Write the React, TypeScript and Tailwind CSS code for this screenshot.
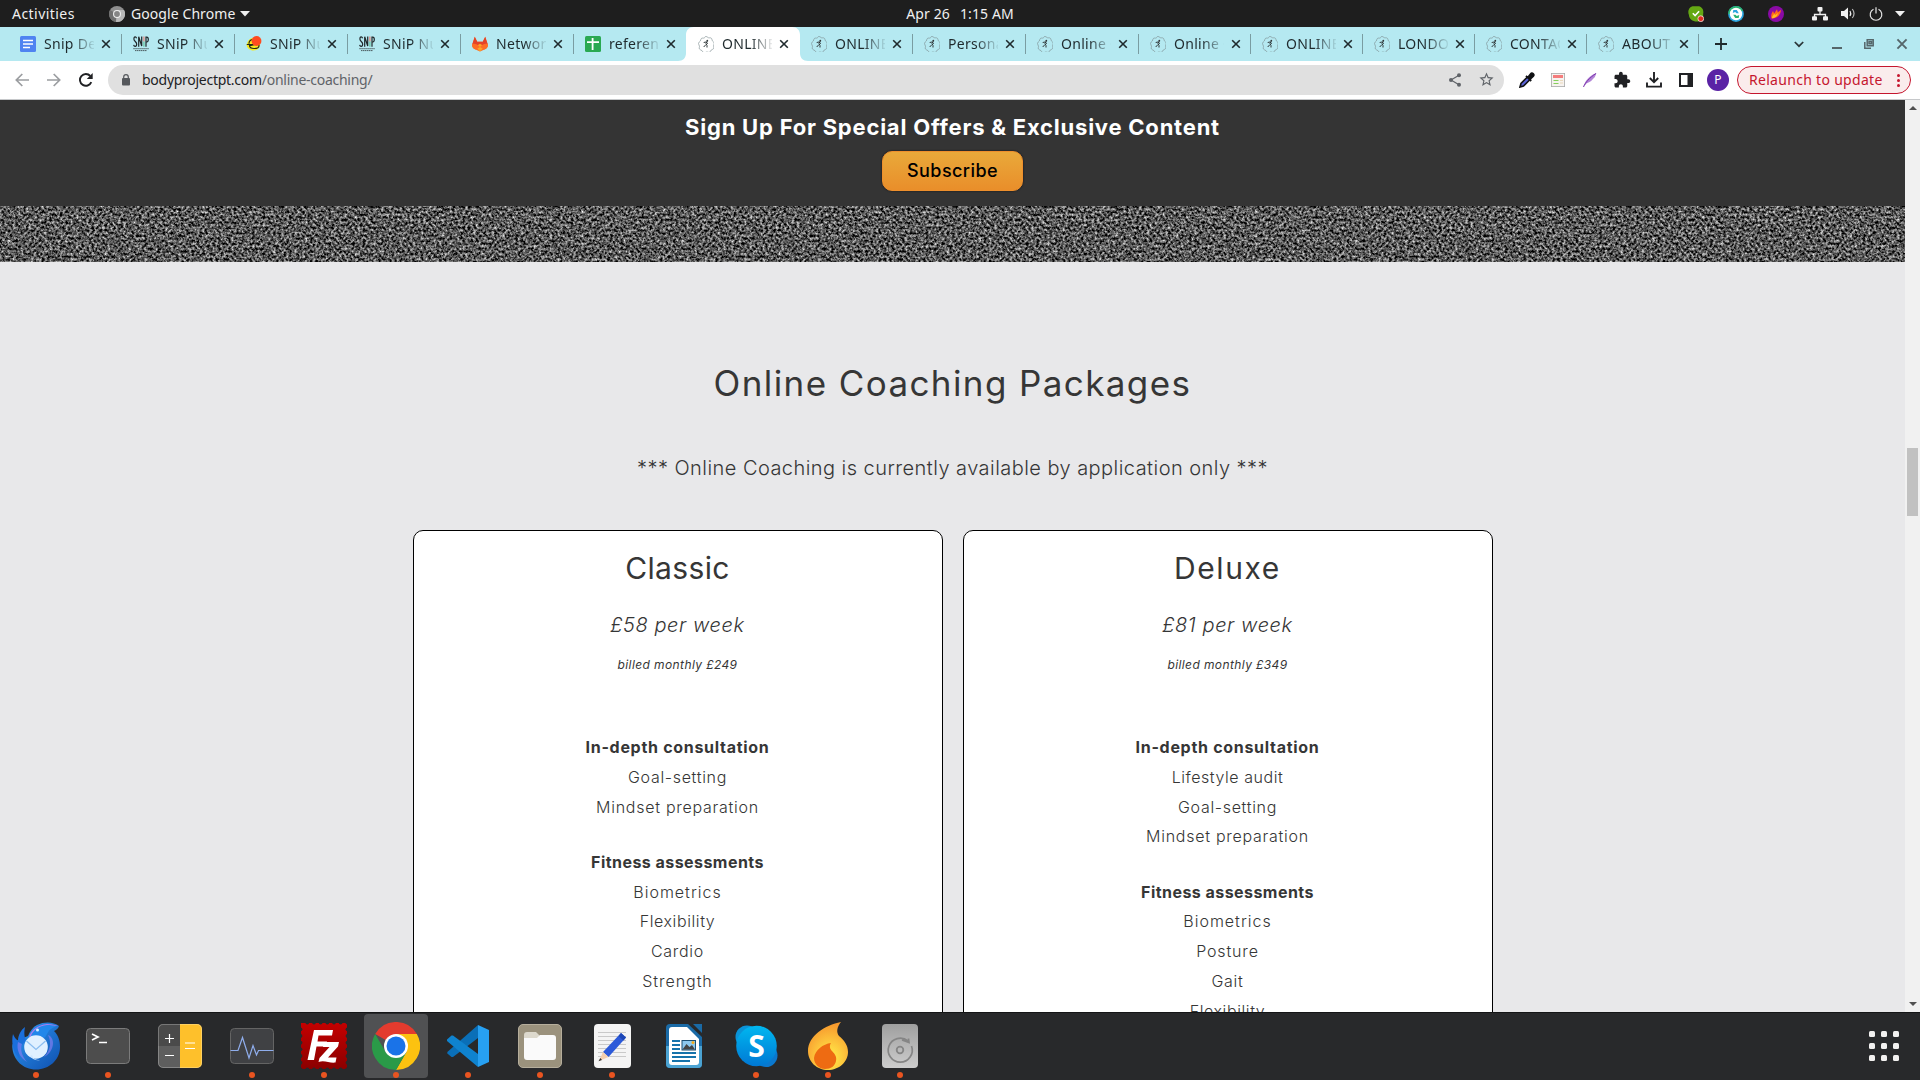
import type { ReactNode } from "react";

type IconKind = "docs" | "snip" | "duck" | "gitlab" | "sheet" | "body";

const tabs: { icon: IconKind; title: string; width: string }[] = [
  { icon: "docs", title: "Snip Design", width: "w-[113px]" },
  { icon: "snip", title: "SNiP Nutrition", width: "w-[113px]" },
  { icon: "duck", title: "SNiP Nutrition", width: "w-[113px]" },
  { icon: "snip", title: "SNiP Nutrition", width: "w-[113px]" },
  { icon: "gitlab", title: "Network", width: "w-[113px]" },
  { icon: "sheet", title: "reference", width: "w-[113px]" },
  { icon: "body", title: "ONLINE", width: "w-[113px]" },
  { icon: "body", title: "ONLINE", width: "w-[113px]" },
  { icon: "body", title: "Personal", width: "w-[113px]" },
  { icon: "body", title: "Online C", width: "w-[113px]" },
  { icon: "body", title: "Online C", width: "w-[112px]" },
  { icon: "body", title: "ONLINE", width: "w-[112px]" },
  { icon: "body", title: "LONDON", width: "w-[112px]" },
  { icon: "body", title: "CONTACT", width: "w-[112px]" },
  { icon: "body", title: "ABOUT U", width: "w-[112px]" },
];
const ACTIVE = 6;

function Favicon({ kind }: { kind: IconKind }) {
  switch (kind) {
    case "docs":
      return (
        <svg viewBox="0 0 16 16" className="size-4">
          <rect width="16" height="16" rx="1.5" fill="#4f83f1" />
          <path d="M3 4.5h10M3 8h10M3 11.5h7" stroke="#fff" strokeWidth="1.6" />
        </svg>
      );
    case "snip":
      return (
        <svg viewBox="0 0 16 16" className="size-4">
          <g fill="none" stroke="#20282b" strokeWidth="1.2">
            <path d="M3.600 2.200C2.800.2.900.5.900 2.900c0 2.600 2.800 2.500 2.800 5.300 0 2.600-2.500 2.800-3.100.6" />
            <path d="M5.700 10.700V.8L8.700 10V.5" />
            <path d="M13 10.700V1.100h.800c2 0 2 4.900 0 4.900H13" />
          </g>
          <path d="M10.900.5v5" stroke="#e98a83" strokeWidth="1.300" />
          <path d="M10.900 5.500v5.200" stroke="#68c9a6" strokeWidth="1.300" />
          <path d="M.3 12.700h15.400M2 14.600h12" stroke="#4c5c60" strokeWidth="1" strokeDasharray="1.500 .5" />
        </svg>
      );
    case "duck":
      return (
        <svg viewBox="0 0 16 16" className="size-4">
          <path d="M1 7.500c1-4 4-6 7-5.500 4 .5 6.500 4 6 7.500-.5 3-3 5-6.500 5C4 14.500 1 12 .5 9z" fill="#f6ea1e" />
          <path d="M.8 8.500h6M3 7.800c0-2.500 1.500-4 3.500-4.300M3.500 9.500c0 2 2 3 4.500 3s5-1 5-2.800-1.500-1.500-4-1.200c-1.800.3-3.500.8-5.500 1z" fill="none" stroke="#24281a" strokeWidth="1.200" />
          <circle cx="10.500" cy="5" r="4.900" fill="#ff4b1f" />
        </svg>
      );
    case "gitlab":
      return (
        <svg viewBox="0 0 16 16" className="size-4">
          <path d="M.3 8.200 2.800.8l2.400 5h5.600l2.400-5 2.500 7.400c.6 2-.2 3.500-1.500 4.500L8 15.500l-6.200-2.800C.5 11.700-.3 10.200.3 8.200z" fill="#fc6d26" />
          <path d="m.3 8.200 2.500-7.400 2.400 5h5.600l2.400-5 2.500 7.400L8 11z" fill="#e24329" />
          <path d="m3.500 10.500 4.500-2.800 4.500 2.800L8 15.600z" fill="#fca326" />
          <path d="M.3 8.200C2.500 7 5 8 8 11l-4.300 2.600C1 12.300-.3 10.400.3 8.200zM15.700 8.200C13.500 7 11 8 8 11l4.300 2.600c2.700-1.300 4-3.200 3.400-5.400z" fill="#fc6d26" />
        </svg>
      );
    case "sheet":
      return (
        <svg viewBox="0 0 16 16" className="size-4">
          <rect width="16" height="16" rx="1.500" fill="#2aa952" />
          <path d="M2 6.200h12M7.600 2v12" stroke="#fff" strokeWidth="1.800" />
        </svg>
      );
    default:
      return (
        <svg viewBox="0 0 16 16" className="size-4">
          <path
            d="M8 .6c1 0 1.300.9 2.200 1.200.9.300 1.800-.2 2.600.4.800.6.500 1.500 1 2.300.5.800 1.500 1 1.700 2 .2.900-.6 1.500-.6 2.400 0 .900.500 1.700 0 2.600-.5.800-1.400.7-2.100 1.300-.7.700-.7 1.600-1.600 2-.9.400-1.600-.3-2.500-.2-.9.100-1.600.9-2.500.6-1-.3-1-1.300-1.700-1.900-.7-.6-1.700-.6-2.200-1.400-.5-.9.100-1.700 0-2.600C2.200 8.400 1.300 7.800 1.400 6.800c.1-1 1.100-1.300 1.600-2 .5-.8.300-1.800 1.100-2.400.8-.6 1.700 0 2.500-.4C7.300 1.600 7.300.6 8 .6z"
            fill="none" stroke="#7b8b8e" strokeWidth=".8" opacity=".7" transform="translate(-1.100 -.3) scale(1.120)"
          />
          <path d="M9.500 4.500 8 7.500m-2.300-1L8 6l2 1.700M8 7.500 9 9.500v2M8 8.500 5.700 11" fill="none" stroke="#30383a" strokeWidth="1" />
          <circle cx="9.300" cy="4.700" r=".9" fill="#30383a" />
        </svg>
      );
  }
}

function Cross({ className }: { className?: string }) {
  return (
    <svg viewBox="0 0 10 10" className={className ?? "size-[10px]"}>
      <path d="m1.200 1.200 7.600 7.600M8.800 1.200 1.200 8.800" stroke="currentColor" strokeWidth="1.600" fill="none" />
    </svg>
  );
}

function SystemBar() {
  return (
    <div className="flex h-[27px] shrink-0 items-center bg-[#1e1e1e] px-3 text-[14px] text-[#f0f0f0]">
      <div className="flex flex-1 items-center">
        <span className="w-[97px] tracking-[0.45px]">Activities</span>
        <svg viewBox="0 0 16 16" className="mr-[6px] size-4">
          <circle cx="8" cy="8" r="8" fill="#8f8f8f" />
          <path d="M8 8 1.100 4A8 8 0 0 0 7 15.900z" fill="#6f6f6f" />
          <path d="M8 4h7a8 8 0 0 1-8 11.900z" fill="#b9b9b9" />
          <circle cx="8" cy="8" r="4" fill="#eee" />
          <circle cx="8" cy="8" r="2.900" fill="#858585" />
        </svg>
        <span className="tracking-[0.08px]">Google Chrome</span>
        <svg viewBox="0 0 10 6" className="ml-[5px] h-[6px] w-[10px]"><path d="M0 0h10L5 5.500z" fill="#f0f0f0" /></svg>
      </div>
      <div className="flex gap-[10px] tracking-[0.12px]">
        <span>Apr 26</span>
        <span>1:15 AM</span>
      </div>
      <div className="flex flex-1 items-center justify-end">
        <svg viewBox="0 0 16 16" className="mr-6 size-4">
          <path d="M4.500.3h6.700c2.500.500 4.800 3.500 4 7l-.2 6.700-5 1.500C5 16 1 13 .9 8.700.1 7.500-.5 2 4.500.3z" fill="#65a813" />
          <path d="m4.800 7.300 2.300 2.300 4-4.300" fill="none" stroke="#fff" strokeWidth="1.600" />
          <circle cx="12.800" cy="12.700" r="2.900" fill="#e02b20" stroke="#fff" strokeWidth=".7" />
        </svg>
        <svg viewBox="0 0 16 16" className="mr-6 size-4">
          <circle cx="8" cy="8" r="7.900" fill="#2ba5e0" />
          <path d="M.1 8A7.900 7.900 0 0 1 15.200 4.800L8 8z" fill="#29b472" />
          <circle cx="8" cy="8" r="6.200" fill="#fff" />
          <path d="m5.300 4 3.500 0 2 3.200-2.200.1-1.400-1.200-2.400.9z" fill="#2ba5e0" /><path d="m10.700 12-3.500 0-2-3.200 2.200-.1 1.400 1.200 2.400-.9z" fill="#29b472" />
        </svg>
        <svg viewBox="0 0 16 16" className="mr-7 size-4">
          <circle cx="8" cy="8" r="8" fill="#8a0aa5" />
          <path d="M3.500 12.500C2.500 9 4 6.500 5 5l1.200 2.500L9 3.200l.8 3L13 4c-.3 3.500-2.300 8-9.500 8.500z" fill="#ff6a1c" />
          <path d="M4 12.300c0-2 1.500-3.500 2.500-4.500l.5 1.500L10 7c-.5 3-2.500 5-6 5.300z" fill="#ffc021" />
        </svg>
        <svg viewBox="0 0 16 14" className="mr-[13px] h-[14px] w-4">
          <path d="M8 4v4M2.500 11V7.500h11V11" fill="none" stroke="#f0f0f0" strokeWidth="1.300" />
          <g fill="#f0f0f0"><rect x="5.500" y="0" width="5" height="4.500" rx="1" /><rect x="0" y="9.300" width="5" height="4.200" rx="1" /><rect x="11" y="9.300" width="5" height="4.200" rx="1" /></g>
        </svg>
        <svg viewBox="0 0 15 13" className="mr-[13px] h-[13px] w-[15px]">
          <path d="M0 4h3l4-3.500v12L3 9H0z" fill="#f0f0f0" />
          <path d="M9 4q1.500 2.500 0 5" fill="none" stroke="#f0f0f0" strokeWidth="1.200" /><path d="M11.300 2q3.500 4.500 0 9" fill="none" stroke="#b5b5b5" strokeWidth="1.200" />
        </svg>
        <svg viewBox="0 0 14 14" className="mr-3 size-[14px]">
          <path d="M4.500 2.200a5.800 5.800 0 1 0 5 0M7 .3v6.200" fill="none" stroke="#e6e6e6" strokeWidth="1.200" />
        </svg>
        <svg viewBox="0 0 10 6" className="mr-[3px] h-[6px] w-[10px]"><path d="M0 0h10L5 5.500z" fill="#f0f0f0" /></svg>
      </div>
    </div>
  );
}

function TabStrip() {
  return (
    <div className="flex h-[34px] shrink-0 items-stretch bg-[#b5e9f1] pl-[9px] text-[#1f2a2d]">
      {tabs.map((t, i) => {
        const active = i === ACTIVE;
        const sep = !active && i !== ACTIVE - 1;
        return (
          <div key={i} className={`${t.width} relative flex shrink-0 items-center`}>
            {active && (
              <svg viewBox="0 0 130 34" className="absolute -left-[9px] top-0 h-[34px] w-[130px]">
                <path d="M0 34c5 0 8-3 8-8V8c0-5 3-8 8-8h98c5 0 8 3 8 8v18c0 5 3 8 8 8z" fill="#fff" />
              </svg>
            )}
            <span className="relative ml-[11px]"><Favicon kind={t.icon} /></span>
            <span className="relative -mt-0.5 ml-2 w-[50px] overflow-hidden whitespace-nowrap text-[14px] tracking-[0.3px] [mask-image:linear-gradient(90deg,#000_28px,transparent_52px)]">
              {t.title}
            </span>
            <span className="relative ml-[7px]"><Cross /></span>
            {sep && <span className="absolute right-0 top-[7px] h-5 w-px bg-[#7a9da2]" />}
          </div>
        );
      })}
      <div className="flex flex-1 items-center">
        <svg viewBox="0 0 12 12" className="ml-4 size-3"><path d="M6 0v12M0 6h12" stroke="#1f2a2d" strokeWidth="1.800" /></svg>
        <svg viewBox="0 0 10 7" className="ml-auto mr-[28px] h-[7px] w-[10px]"><path d="m.8 1 4.200 4.200L9.200 1" fill="none" stroke="#2b3639" strokeWidth="1.700" /></svg>
        <span className="mr-[22px] mt-2 h-[2px] w-[10px] bg-[#55666a]" />
        <svg viewBox="0 0 10 10" className="mr-[22px] size-[10px]"><path d="M3.200.8h6v6h-6zM5 2.800h2.500v2H5zM.8 3v6.200H7" fill="none" stroke="#55666a" strokeWidth="1.500" /></svg>
        <Cross className="mr-[12px] size-3 text-[#55666a]" />
      </div>
    </div>
  );
}

function Toolbar() {
  return (
    <div className="flex h-[39px] shrink-0 items-center border-b border-[#c6c8ca] bg-white pl-[15px] pr-[9px] text-[#202124]">
      <svg viewBox="0 0 14 14" className="size-[14px]"><path d="M14 7H1.500M7.300 1 1.300 7l6 6" fill="none" stroke="#9b9da0" strokeWidth="1.700" /></svg>
      <svg viewBox="0 0 14 14" className="ml-[18px] size-[14px]"><path d="M0 7h12.500M6.700 1l6 6-6 6" fill="none" stroke="#9b9da0" strokeWidth="1.700" /></svg>
      <svg viewBox="0 0 14 14" className="ml-[18px] size-[14px]">
        <path d="M12.300 9.200A5.900 5.900 0 1 1 11.300 3" fill="none" stroke="#202124" strokeWidth="1.900" />
        <path d="M13.700 0v6H7.800z" fill="#202124" />
      </svg>
      <div className="ml-[15px] -mt-px flex h-[30px] w-[1396px] items-center rounded-full bg-[#e0e0e0] pl-[14px] pr-[9px] text-[14px]">
        <svg viewBox="0 0 8 12" className="h-3 w-2"><rect y="4" width="8" height="7.500" rx="1" fill="#55585c" /><path d="M1.700 4.500V3a2.300 2.300 0 0 1 4.600 0v1.500" fill="none" stroke="#55585c" strokeWidth="1.200" /></svg>
        <span className="-mt-px ml-3 tracking-[-0.27px]">bodyprojectpt.com<span className="text-[#5f6368]">/online-coaching/</span></span>
        <svg viewBox="0 0 12 14" className="ml-auto h-[14px] w-3">
          <path d="M10 2.200 2 7l8 4.800" fill="none" stroke="#5f6368" strokeWidth="1.200" />
          <g fill="#5f6368"><circle cx="10" cy="2.300" r="2" /><circle cx="2" cy="7" r="2" /><circle cx="10" cy="11.700" r="2" /></g>
        </svg>
        <svg viewBox="0 0 24 24" className="ml-[17px] size-[17px]"><path d="m22 9.240-7.190-.62L12 2 9.190 8.630 2 9.240l5.460 4.730L5.820 21 12 17.270 18.180 21l-1.630-7.030L22 9.240zM12 15.400l-3.760 2.270 1-4.280-3.320-2.880 4.380-.38L12 6.100l1.710 4.040 4.380.38-3.320 2.880 1 4.280L12 15.400z" fill="#5f6368" /></svg>
      </div>
      <svg viewBox="0 0 16 16" className="ml-[15px] size-4">
        <path d="M8.200 5.200 2 11.500 1 15l3.500-1 6.300-6.200" fill="#5b63d8" stroke="#101114" strokeWidth="1.600" />
        <path d="m7 3.800 5.200 5.200M8.800 5.500l3-3.800c1.200-1.500 4 .8 2.500 2.500l-3.600 3.300z" stroke="#101114" strokeWidth="1.800" fill="#101114" />
      </svg>
      <svg viewBox="0 0 14 14" className="ml-4 size-[14px]">
        <rect x=".4" y=".4" width="13.200" height="13.200" fill="#f7f3f0" stroke="#a8a8a8" strokeWidth=".8" />
        <rect x="2" y="2" width="10" height="3" fill="#f47d7d" /><path d="M2.500 7.500h5M2.500 10.500h5" stroke="#86cf5c" strokeWidth="1.200" /><path d="M9 7.500h3M9 10h3" stroke="#ead9bb" />
      </svg>
      <svg viewBox="0 0 14 16" className="ml-[18px] h-4 w-[14px]">
        <path d="M.5 14.500C2 9 6 3.500 13.500 1c-1 2-1 3-2 4.500-.7 1-1.500 1-2 2C8 10 5 10.500 3.500 11.500z" fill="#b284d6" />
        <path d="M.5 15C2.500 10.500 6 6 13 1.500" stroke="#7b34ab" strokeWidth="1" fill="none" />
      </svg>
      <svg viewBox="0 0 24 24" className="ml-[16px] size-[18px]"><path d="M20.500 11H19V7c0-1.100-.9-2-2-2h-4V3.500C13 2.120 11.880 1 10.500 1S8 2.120 8 3.500V5H4c-1.100 0-1.990.9-1.990 2v3.800H3.500c1.490 0 2.700 1.210 2.700 2.700s-1.210 2.700-2.700 2.700H2V20c0 1.100.9 2 2 2h3.800v-1.500c0-1.490 1.210-2.700 2.700-2.700 1.490 0 2.700 1.210 2.700 2.700V22H17c1.100 0 2-.9 2-2v-4h1.500c1.380 0 2.500-1.120 2.500-2.500S21.880 11 20.500 11z" fill="#202124" /></svg>
      <svg viewBox="0 0 16 16" className="ml-[15px] size-4"><path d="M8 0v10M3.800 6 8 10.200 12.200 6M1 10.500V14.600h14v-4.100" fill="none" stroke="#202124" strokeWidth="1.900" /></svg>
      <svg viewBox="0 0 14 14" className="ml-[17px] size-[14px]"><path d="M1 1h12v12H1z" fill="none" stroke="#202124" strokeWidth="2" /><path d="M8.500 1H13v12H8.500z" fill="#202124" /></svg>
      <span className="ml-[14px] flex size-[22px] items-center justify-center rounded-full bg-[#5a22a5] text-[12px] text-white">P</span>
      <div className="ml-auto flex h-7 w-[174px] items-center rounded-full border border-[#c5162e] bg-[#faecec] pl-[11px] text-[14px] text-[#c5162e]">
        <span className="-mt-0.5 tracking-[0.3px]">Relaunch to update</span>
        <span className="ml-[14px] flex flex-col gap-[2px]">
          <i className="size-[3px] rounded-full bg-[#c5162e]" />
          <i className="size-[3px] rounded-full bg-[#c5162e]" />
          <i className="size-[3px] rounded-full bg-[#c5162e]" />
        </span>
      </div>
    </div>
  );
}

function NoiseBand() {
  return (
    <svg className="block h-[56px] w-full">
      <filter id="grain" x="0" y="0" width="100%" height="100%" colorInterpolationFilters="sRGB">
        <feTurbulence type="fractalNoise" baseFrequency="0.38" numOctaves="3" seed="7" />
        <feColorMatrix values="1.55 0 0 0 -0.43  1.55 0 0 0 -0.43  1.55 0 0 0 -0.43  0 0 0 0 1" />
      </filter>
      <rect width="100%" height="100%" filter="url(#grain)" />
    </svg>
  );
}

type Item = { text: string; track: string };
type Group = { title: string; track: string; items: Item[] };

const goal: Item = { text: "Goal-setting", track: "tracking-[0.68px]" };
const mindset: Item = { text: "Mindset preparation", track: "tracking-[0.73px]" };
const biometrics: Item = { text: "Biometrics", track: "tracking-[1px]" };
const flexibility: Item = { text: "Flexibility", track: "tracking-[0.6px]" };

const packages: { name: string; track: string; price: string; bill: string; groups: Group[] }[] = [
  {
    name: "Classic",
    track: "tracking-[0.34px]",
    price: "£58 per week",
    bill: "billed monthly £249",
    groups: [
      { title: "In-depth consultation", track: "tracking-[0.7px]", items: [goal, mindset] },
      {
        title: "Fitness assessments",
        track: "tracking-[0.45px]",
        items: [biometrics, flexibility, { text: "Cardio", track: "tracking-[0.7px]" }, { text: "Strength", track: "tracking-[0.95px]" }],
      },
    ],
  },
  {
    name: "Deluxe",
    track: "tracking-[1.6px]",
    price: "£81 per week",
    bill: "billed monthly £349",
    groups: [
      { title: "In-depth consultation", track: "tracking-[0.7px]", items: [{ text: "Lifestyle audit", track: "tracking-[0.55px]" }, goal, mindset] },
      {
        title: "Fitness assessments",
        track: "tracking-[0.45px]",
        items: [biometrics, { text: "Posture", track: "tracking-[0.85px]" }, { text: "Gait", track: "tracking-[0.7px]" }, flexibility],
      },
    ],
  },
];

function Page() {
  return (
    <div className="flex min-h-0 flex-1 bg-[#e8e8ea]">
      <main className="min-w-0 flex-1 overflow-hidden text-center font-[Inter,sans-serif] text-[#363636]">
        <section className="flex h-[106px] flex-col items-center bg-[#343434] pt-3">
          <p className="text-[22px] font-bold leading-[30px] tracking-[0.78px] text-white">Sign Up For Special Offers &amp; Exclusive Content</p>
          <button className="mt-[9px] h-10 w-[141px] rounded-[10px] border border-[#ee8f2c] bg-linear-to-b from-[#e9a93a] to-[#e98e2a] pb-0.5 text-[18px] font-medium tracking-[0.43px] text-black shadow-[0_0_2px_#111]">
            Subscribe
          </button>
        </section>
        <NoiseBand />
        <h2 className="pt-[100px] text-[35px] leading-[42px] tracking-[1.4px]">Online Coaching Packages</h2>
        <p className="mt-[49px] text-[20px] font-light leading-[30px] tracking-[0.45px]">
          *** Online Coaching is currently available by application only ***
        </p>
        <div className="mt-[47px] flex justify-center gap-5">
          {packages.map((p) => (
            <article key={p.name} className="h-[700px] w-[530px] rounded-[10px] border border-black bg-white pt-[19px]">
              <h3 className={`text-[30px] leading-9 ${p.track}`}>{p.name}</h3>
              <p className="mt-6 text-[20px] font-light italic leading-[30px] tracking-[0.6px]">{p.price}</p>
              <p className="mb-[58px] mt-[15px] text-[12px] italic leading-5 tracking-[0.4px]">{p.bill}</p>
              {p.groups.map((g) => (
                <div key={g.title} className="mb-[25.5px] text-[16px] leading-[29.8px]">
                  <h4 className={`font-bold ${g.track}`}>{g.title}</h4>
                  {g.items.map((it) => (
                    <p key={it.text} className={`font-light ${it.track}`}>{it.text}</p>
                  ))}
                </div>
              ))}
            </article>
          ))}
        </div>
      </main>
      <div className="flex w-[15px] flex-col items-center bg-[#f1f1f1] py-[5px]">
        <svg viewBox="0 0 8 4" className="mt-[1px] h-1 w-2"><path d="M0 4h8L4 0z" fill="#505050" /></svg>
        <div className="mt-[338px] h-[68px] w-[11px] bg-[#c1c1c1]" />
        <svg viewBox="0 0 8 4" className="mb-[1px] mt-auto h-1 w-2"><path d="M0 0h8L4 4z" fill="#505050" /></svg>
      </div>
    </div>
  );
}

const zigzag = Array.from({ length: 7 }, (_, i) => 4 + i * 6.67);

const dock: { name: string; running: boolean; art: ReactNode }[] = [
  {
    name: "Thunderbird",
    running: true,
    art: (
      <>
        <defs><linearGradient id="tb" x1="0" y1="0" x2="1" y2="1"><stop offset="0" stopColor="#2f9bf5" /><stop offset="1" stopColor="#0f4fae" /></linearGradient></defs>
        <path d="M16 14C5 19 0 19 .3 25 1 38 11 47.500 24 47.500s24-9.500 24-22.500c0-7-2-12-6-16 2-1 4-2 5-5-5-4-14-5-22-1-4 2-7 6-9 11z" fill="url(#tb)" />
        <path d="M1 12C-1 20 1 32 8 37c-2-8 0-12 6-19-2-3-2-8-1-13C9 8 6 13 6 19 4 17 2 15 1 12z" fill="#1a6fdc" />
        <path d="M17 15c2-7 9-12 18-13 5 0 9 1 11 2-7-1-13 0-18 4-4 3-6 6-11 7z" fill="#a97ef0" />
        <path d="M19 14C21 8 27 4 35 3c4 0 7 .5 9 1.500-3 1-5 2-7 4l-4 7z" fill="#2187ea" />
        <path d="M6 20c-2 8 2 16 9 20-5-6-7-12-5-18zM36 13c4 8 2 16-4 22 5-2 9-8 9-14 0-4-2-7-5-8z" fill="#7f7df0" opacity=".7" />
        <circle cx="24" cy="25" r="11.800" fill="#e0f0ff" />
        <path d="M14.500 19 24 27.500l9.500-8.500" fill="none" stroke="#8bbdf0" strokeWidth="1.300" />
        <path d="M18 34c3 4 7 5 10 4-5 0-7-2-8-5z" fill="#cfe7ff" />
        <circle cx="25.500" cy="8" r="1.500" fill="#d6f0ff" />
      </>
    ),
  },
  {
    name: "Terminal",
    running: true,
    art: (
      <>
        <rect x="2.500" y="6.500" width="43" height="35" rx="4" fill="#4d4d4d" stroke="#7b7b7b" />
        <path d="m8 12 6 3-6 3" fill="none" stroke="#fff" strokeWidth="1.700" /><path d="M15 20.500h8" stroke="#fff" strokeWidth="1.500" />
      </>
    ),
  },
  {
    name: "Calculator",
    running: false,
    art: (
      <>
        <rect x="2" y="2" width="44" height="44" rx="5" fill="#5e5e5e" />
        <path d="M2 24V7a5 5 0 0 1 5-5h17v22z" fill="#4a4a4a" /><path d="M24 2h17a5 5 0 0 1 5 5v34a5 5 0 0 1-5 5H24z" fill="#fec02b" />
        <rect x="2.500" y="2.500" width="43" height="43" rx="4.500" fill="none" stroke="#fff" strokeOpacity=".25" />
        <path d="M9 16.500h9M13.500 12v9M9 33.500h9M29 21h10M29 26.500h10" stroke="#fff" strokeWidth="1.200" />
      </>
    ),
  },
  {
    name: "Monitor",
    running: true,
    art: (
      <>
        <rect x="2.500" y="6.500" width="43" height="35" rx="4" fill="#404144" stroke="#646464" />
        <path d="M2.500 28.500H10l4.500-13L21 36l4-12.500L28.500 33l2-4.500h15" fill="none" stroke="#8fadec" strokeWidth="1.200" />
      </>
    ),
  },
  {
    name: "FileZilla",
    running: true,
    art: (
      <>
        <defs><linearGradient id="fz" x1="0" y1="0" x2="0" y2="1"><stop offset="0" stopColor="#c40000" /><stop offset="1" stopColor="#8b0000" /></linearGradient></defs>
        <rect x="1" y="1" width="46" height="46" fill="url(#fz)" />
        {zigzag.map((v) => (
          <g key={v}>
            <g fill="#28292b"><circle cx={v + 3.300} cy=".5" r="1.900" /><circle cx=".5" cy={v + 3.300} r="1.900" /><circle cx="47.500" cy={v + 3.300} r="1.900" /><circle cx={v + 3.300} cy="47.500" r="1.900" /></g>
          </g>
        ))}
        <path d="M14 8h19l-1 5.500H18.500l-1 6h9.500l-1 5H16.500L14 38H7.500z" fill="#fff" />
        <path d="M24 20h15l-1 4.500-10 11h8.500l-1 5c-6 1-11-3-17-.5l1-4 10-11h-6.500z" fill="#fff" />
      </>
    ),
  },
  {
    name: "Chrome",
    running: true,
    art: (
      <>
        <path d="M24 24 3.200 12A24 24 0 0 1 44.800 12z" fill="#e33b2e" />
        <path d="M24 12h20.800A24 24 0 0 1 24 48l10.400-18z" fill="#fcc210" />
        <path d="M3.200 12 13.600 30 24 36l10.400-6L24 48A24 24 0 0 1 3.200 12z" fill="#2a9a48" />
        <circle cx="24" cy="24" r="12" fill="#fff" /><circle cx="24" cy="24" r="9.500" fill="#1a73e8" />
      </>
    ),
  },
  {
    name: "Code",
    running: true,
    art: (
      <>
        <path d="M34 3v13L9 35l-1.500 0L3.300 31.500v-1.500z" fill="#0a6fb8" />
        <path d="M3 17.500 7.500 13.500H9L34 32v13L3 19z" fill="#0f83cf" />
        <path d="M34 3 45 8v32l-11 5z" fill="#27a0f2" />
      </>
    ),
  },
  {
    name: "Files",
    running: true,
    art: (
      <>
        <rect x="2.500" y="2.500" width="43" height="43" rx="4.500" fill="#9b927d" stroke="#b6ae9c" />
        <path d="M8 13c0-2 1-3 3-3h9l4 4h13v10H8z" fill="#ddd9cd" />
        <path d="M8 16h13l3-3h13c2 0 3 1 3 3v19c0 2-1 3-3 3H11c-2 0-3-1-3-3z" fill="#fafafa" />
      </>
    ),
  },
  {
    name: "Editor",
    running: true,
    art: (
      <>
        <rect x="6" y="2" width="37" height="44" rx="4" fill="#f4f4f4" />
        <path d="M10 10.500h28M10 14.500h28M10 18.500h28M10 22.500h28M10 26.500h28M10 30.500h28M10 34.500h28" stroke="#c9c9c9" />
        <path d="m33 11 5 4.500L20.500 35l-5.500-5z" fill="#2c5ad9" /><path d="m30.500 14 2.500-3 5 4.500-2.500 3z" fill="#1d46b5" />
        <path d="m15 30 5.500 5-9.500 4z" fill="#f3cfae" /><path d="m12.300 36 1.700 2-3.500 1.300z" fill="#333" />
      </>
    ),
  },
  {
    name: "Writer",
    running: false,
    art: (
      <>
        <rect x="6" y="2" width="36" height="44" rx="4" fill="#1a6aa6" /><path d="M6 24h36v18a4 4 0 0 1-4 4H10a4 4 0 0 1-4-4z" fill="#4ba3d3" />
        <path d="M12 5h15l12 12v23c0 2-1 3-3 3H12c-2 0-3-1-3-3V8c0-2 1-3 3-3z" fill="#fff" />
        <path d="M27 1h16v15z" fill="#28292b" /><path d="M33 2h9v9z" fill="#1a6aa6" />
        <path d="M12 19h8M12 23h8M12 27h8M12 31h24M12 35h24M12 39h18" stroke="#1673ab" strokeWidth="1.800" />
        <rect x="22" y="18.500" width="13.500" height="9.500" fill="#8dc8ee" stroke="#1c4f73" /><path d="m22.500 27.500 4-5.500 3 3 2.500-2 3 4.500z" fill="#444" /><circle cx="33" cy="20.500" r="1.500" fill="#f7ae1b" />
      </>
    ),
  },
  {
    name: "Skype",
    running: true,
    art: (
      <>
        <defs><linearGradient id="sk" x1="0" y1="0" x2="0" y2="1"><stop offset="0" stopColor="#00b7f0" /><stop offset="1" stopColor="#0078d4" /></linearGradient></defs>
        <circle cx="15" cy="15" r="11.500" fill="#0a93d8" /><circle cx="34" cy="33.500" r="11.500" fill="#0a78cf" />
        <circle cx="24.500" cy="24" r="20.300" fill="url(#sk)" />
        <text x="24.500" y="34.500" textAnchor="middle" fontSize="30" fontWeight="700" fill="#fff" className="font-['Open_Sans',sans-serif]">S</text>
      </>
    ),
  },
  {
    name: "Flame",
    running: true,
    art: (
      <>
        <defs><radialGradient id="fl" cx=".55" cy=".75" r=".7"><stop offset="0" stopColor="#fff04a" /><stop offset=".5" stopColor="#fdc53c" /><stop offset="1" stopColor="#f79a2e" /></radialGradient></defs>
        <path d="M37 0c-4 5-5 10-2 14 5 4 9 9 9 16 0 10-9 18-20 18S4 40 4 29C4 14 21 3 37 0z" fill="url(#fl)" />
        <path d="M27 21c-2 3-1 6 1 8 3 3 5 6 4 10-1 5-5 8-11 8s-11-5-11-11c1-8 9-14 17-15z" fill="#ee6b12" />
      </>
    ),
  },
  {
    name: "Disk",
    running: true,
    art: (
      <>
        <defs><linearGradient id="dk" x1="0" y1="0" x2="0" y2="1"><stop offset="0" stopColor="#9f9f9f" /><stop offset="1" stopColor="#cdcdcd" /></linearGradient></defs>
        <rect x="6" y="2" width="36" height="44" rx="4" fill="url(#dk)" />
        <path d="M32 19a12 12 0 1 0 3.500 5M26 18l7 2.500-.5-4" fill="none" stroke="#858585" strokeWidth="1.700" />
        <circle cx="24" cy="28" r="3.300" fill="none" stroke="#858585" strokeWidth="1.800" />
      </>
    ),
  },
];

function Dock() {
  return (
    <div className="flex h-[68px] shrink-0 items-start border-t border-[#141516] bg-[#28292b] pt-px">
      {dock.map((d) => (
        <div key={d.name} className="flex w-[72px] justify-center">
          <div className={`relative flex h-16 w-16 items-center justify-center rounded ${d.name === "Chrome" ? "bg-[#505153]" : ""}`}>
            <svg viewBox="0 0 48 48" className="size-12">{d.art}</svg>
            {d.running && <span className="absolute bottom-0 left-[29px] size-[6px] rounded-full bg-[#e95420]" />}
          </div>
        </div>
      ))}
      <div className="ml-auto mr-[21px] mt-[17px] grid grid-cols-3 gap-[6px]">
        {Array.from({ length: 9 }, (_, i) => (
          <span key={i} className="size-[6px] rounded-[1.5px] bg-[#f2f1f0]" />
        ))}
      </div>
    </div>
  );
}

export default function App() {
  return (
    <div className="flex h-[1080px] w-[1920px] flex-col overflow-hidden font-['Noto_Sans',sans-serif]">
      <SystemBar />
      <TabStrip />
      <Toolbar />
      <Page />
      <Dock />
    </div>
  );
}
